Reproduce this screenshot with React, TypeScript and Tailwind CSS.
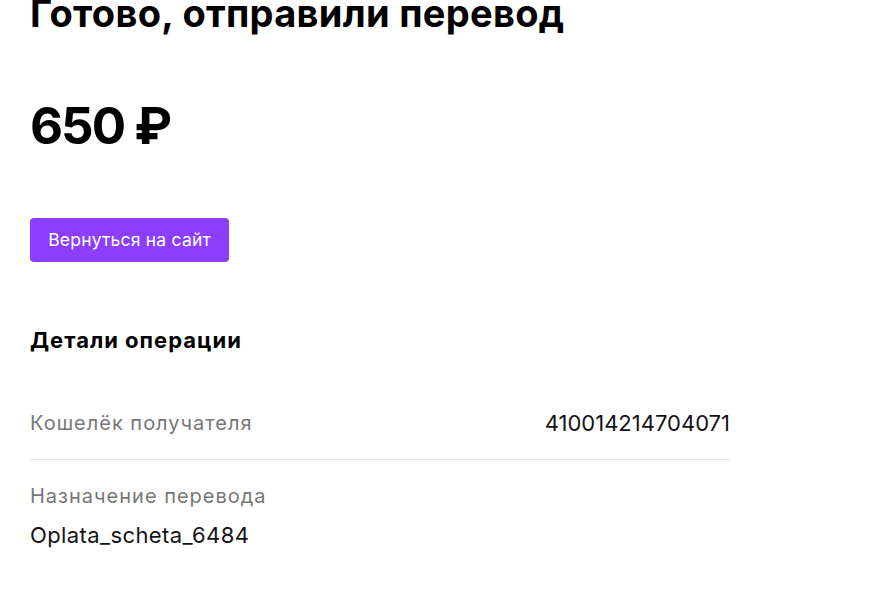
import React from 'react';

const font = { fontFamily: 'Inter, "Noto Sans", sans-serif' };

export default function App() {
  return (
    <div className="min-h-[589px] bg-white pl-[30px] text-black overflow-hidden" style={font}>
      <div className="w-[700px]">
        <h1 className="-mt-[10px] text-[38px] font-bold leading-[46px] tracking-[0.3px]">
          Готово, отправили перевод
        </h1>
        <div className="mt-[60px] text-[51px] font-bold leading-[60px] tracking-[-2px]">650 ₽</div>
        <button className="mt-[62px] h-[44px] w-[199px] rounded-[4px] bg-[#8b3ffd] text-white text-[17.5px] tracking-[0.2px]">
          Вернуться на сайт
        </button>
        <h2 className="mt-[64px] text-[22px] font-bold leading-[28px] tracking-[1px]">Детали операции</h2>
        <div className="mt-[55px] flex items-center justify-between pb-[22px] border-b border-[#e6e6e6]">
          <span className="text-[20px] leading-[28px] tracking-[1px] text-[#777777]">Кошелёк получателя</span>
          <span className="text-[22px] leading-[28px] text-[#141414]">410014214704071</span>
        </div>
        <div className="pt-[22px]">
          <div className="text-[20px] leading-[28px] tracking-[1px] text-[#777777]">Назначение перевода</div>
          <div className="mt-[11px] text-[22px] leading-[28px] tracking-[0.4px] text-[#141414]">Oplata_scheta_6484</div>
        </div>
      </div>
    </div>
  );
}
